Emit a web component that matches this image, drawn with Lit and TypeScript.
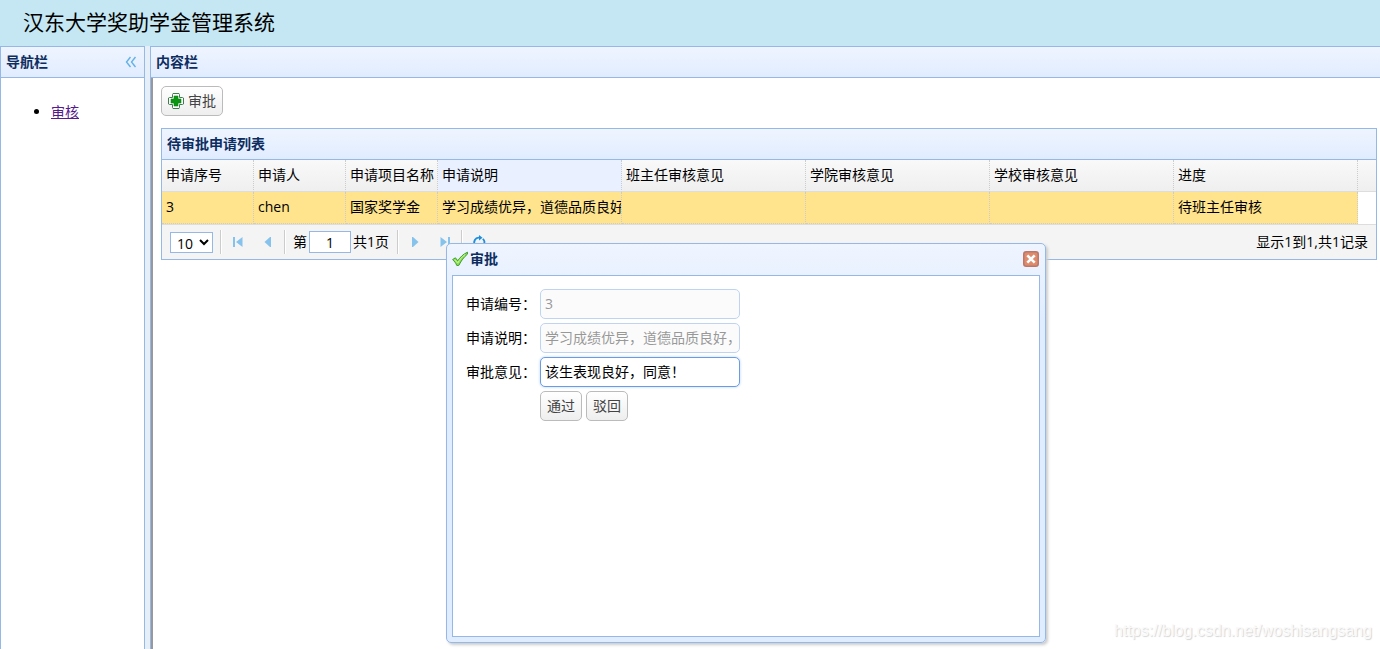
import { LitElement, html, css, svg } from "lit";
import { customElement, state } from "lit/decorators.js";

interface Column {
  field: string;
  title: string;
  span: number;
  hover?: boolean;
}

const COLUMNS: Column[] = [
  { field: "id", title: "申请序号", span: 1 },
  { field: "user", title: "申请人", span: 1 },
  { field: "project", title: "申请项目名称", span: 1 },
  { field: "note", title: "申请说明", span: 2, hover: true },
  { field: "teacher", title: "班主任审核意见", span: 2 },
  { field: "college", title: "学院审核意见", span: 2 },
  { field: "school", title: "学校审核意见", span: 2 },
  { field: "progress", title: "进度", span: 2 },
];

const ROWS: Record<string, string>[] = [
  {
    id: "3",
    user: "chen",
    project: "国家奖学金",
    note: "学习成绩优异，道德品质良好，",
    teacher: "",
    college: "",
    school: "",
    progress: "待班主任审核",
  },
];

const icon = (body: unknown) =>
  html`<svg class="icon" viewBox="0 0 16 16" width="16" height="16" aria-hidden="true">${body}</svg>`;

const addIcon = icon(svg`
  <path d="M5 .5h6l.5 1v3h3l1 .5v6l-1 .5h-3v3l-.5 1H5l-.5-1v-3h-3L.5 11V5l1-.5h3v-3z" fill="#fff" stroke="#3f7d4c"/>
  <path d="M6 3h4v3h3v4h-3v3H6v-3H3V6h3z" fill="#0c9512" stroke="#0a8a10" stroke-width=".6"/>`);

const okIcon = icon(svg`
  <path d="M.6 8.600 3.400 6.800l2.400 3C8 6.400 11 3.200 15.500 1.200L15.400 3.200C11.800 6.200 9.200 9.600 6.900 14.300L4.800 14.500C3.800 12 2.400 10.200.6 8.600z"
    fill="#8fe055" stroke="#3c9a2e" stroke-linejoin="round"/>
  <path d="M2.600 8.700 5.700 12C7.600 8.500 10.200 5.700 13 3.600" fill="none" stroke="#c8f59b"/>`);

const closeIcon = icon(svg`
  <rect x=".75" y=".75" width="14.500" height="14.500" rx="2.500" fill="#e08a6c" stroke="#b9786a" stroke-width="1.500"/>
  <path d="M4.300 4.300l7.400 7.400M11.700 4.300l-7.400 7.400" stroke="#fff" stroke-width="2.600"/>`);

const collapseIcon = icon(svg`
  <path d="M7.500 3 3.500 8l4 5M12.500 3l-4 5 4 5" fill="none" stroke="#64b1e6" stroke-width="1.400"/>`);

const firstIcon = icon(svg`<path d="M3 3h2v10H3zM12.500 3v10L6 8z" fill="#86c3ec"/>`);
const prevIcon = icon(svg`<path d="M11 3v10h-1L4.500 8 10 3z" fill="#86c3ec"/>`);
const nextIcon = icon(svg`<path d="M5 3v10h1l5.500-5L6 3z" fill="#86c3ec"/>`);
const lastIcon = icon(svg`<path d="M11 3h2v10h-2zM3.500 3v10L10 8z" fill="#86c3ec"/>`);
const reloadIcon = icon(svg`
  <path d="M4.300 11.200A4.600 4.600 0 0 1 8.500 3.700M11.800 4.800a4.600 4.600 0 0 1-4.200 7.900" fill="none" stroke="#1e8fdc" stroke-width="1.800"/>
  <path d="M8 1v5.500L11.500 3.700zM8 10v5.200L4.700 12.600z" fill="#1e8fdc"/>`);

@customElement("app-root")
export class AppRoot extends LitElement {
  @state() private opinion = "该生表现良好，同意！";

  static styles = css`
    :host {
      display: flex;
      flex-direction: column;
      position: relative;
      height: 100vh;
      overflow: hidden;
      background: #fff;
      color: #000;
      font: 14px/20px "Open Sans", "Noto Sans CJK SC", sans-serif;
    }
    * {
      box-sizing: border-box;
    }
    button,
    input,
    select {
      font: inherit;
    }
    .icon {
      display: block;
      flex: none;
    }
    .banner {
      flex: none;
      height: 46px;
      padding: 0 23px;
      background: #c4e7f3;
    }
    .banner h1 {
      margin: 0;
      font-size: 21px;
      line-height: 44px;
      font-weight: 400;
    }
    .layout {
      flex: 1;
      display: grid;
      grid-template-columns: 145px minmax(0, 1fr);
      gap: 5px;
      background: #e6eef8;
      min-height: 0;
    }
    .panel {
      display: flex;
      flex-direction: column;
      background: #fff;
      border: 1px solid #95b8e7;
      border-bottom: 0;
      min-height: 0;
    }
    .content {
      border-right: 0;
    }
    .bar {
      display: flex;
      align-items: center;
      justify-content: space-between;
      height: 31px;
      padding: 0 5px;
      border-bottom: 1px solid #95b8e7;
      background: linear-gradient(to bottom, #eff5ff, #e0ecff);
      color: #0e2d5f;
    }
    .bar h2,
    .window h2 {
      margin: 0;
      font: inherit;
      font-weight: 700;
    }
    .plain {
      display: flex;
      padding: 0;
      border: 0;
      background: none;
    }
    .menu {
      margin: 24px 0;
      padding-left: 50px;
    }
    .menu a {
      color: #551a8b;
    }
    .workspace {
      flex: 1;
      padding: 8px 3px 8px 8px;
      border-left: 2px solid #999;
    }
    .btn {
      display: inline-flex;
      align-items: center;
      gap: 4px;
      height: 30px;
      padding: 0 6px;
      border: 1px solid #bbb;
      border-radius: 5px;
      background: linear-gradient(to bottom, #fff, #eee);
      color: #444;
    }
    .grid {
      margin-top: 12px;
      border: 1px solid #95b8e7;
    }
    .view {
      border-bottom: 1px solid #ddd;
      background: linear-gradient(#f9f9f9, #efefef 31px, #ddd 31px, #ddd 32px, #fff 32px);
    }
    table {
      width: calc(100% - 18px);
      table-layout: fixed;
      border-collapse: separate;
      border-spacing: 0;
    }
    .narrow {
      width: 7.6923%;
    }
    .wide {
      width: 15.3846%;
    }
    th,
    td {
      height: 32px;
      padding: 0 0 2px 4px;
      border-right: 1px dotted #ccc;
      border-bottom: 1px dotted #ccc;
      text-align: left;
      font-weight: 400;
      white-space: nowrap;
      overflow: hidden;
    }
    th {
      border-bottom: 1px solid #ddd;
    }
    th.hover {
      background: #e9f0ff;
    }
    .selected td {
      background: #ffe48d;
    }
    .pager {
      display: flex;
      align-items: center;
      height: 34px;
      padding: 0 8px;
      background: #f4f4f4;
    }
    .pager select {
      width: 43px;
      height: 21px;
      margin-right: 6px;
      padding: 0 0 0 2px;
      border: 1px solid #95b8e7;
      background: #fff;
      color: #000;
      font-family: "Open Sans", sans-serif;
    }
    .pager input {
      width: 42px;
      height: 22px;
      margin: 0 2px;
      padding: 0;
      border: 1px solid #95b8e7;
      text-align: center;
    }
    .sep {
      width: 2px;
      height: 24px;
      margin: 0 1px;
      border-left: 1px solid #ccc;
      border-right: 1px solid #fff;
    }
    .nav {
      width: 30px;
      justify-content: center;
    }
    .page {
      display: flex;
      align-items: center;
      margin: 0 7px 0 6px;
    }
    .summary {
      margin-left: auto;
    }
    .window {
      position: absolute;
      left: 446px;
      top: 243px;
      width: 600px;
      height: 400px;
      display: flex;
      flex-direction: column;
      padding: 0 5px 5px;
      border: 1px solid #95b8e7;
      border-radius: 5px;
      background: linear-gradient(to bottom, #eff5ff, #e0ecff 20%);
      box-shadow: 2px 2px 3px #ccc;
    }
    .caption {
      display: flex;
      align-items: center;
      gap: 2px;
      height: 31px;
      padding: 0 1px 2px 0;
      color: #0e2d5f;
    }
    .caption .plain {
      margin-left: auto;
    }
    .form {
      flex: 1;
      display: grid;
      grid-template-columns: 70px 200px;
      grid-auto-rows: 30px;
      gap: 4px;
      align-items: center;
      padding: 13px;
      border: 1px solid #95b8e7;
      background: #fff;
    }
    .form input {
      height: 30px;
      min-width: 0;
      padding: 0 4px 2px;
      border: 1px solid #95b8e7;
      border-radius: 5px;
      outline: none;
      background: #fff;
      color: #000;
    }
    .form input:disabled {
      opacity: 0.6;
      background: #fafafa;
      color: #545454;
    }
    .form .active {
      border-color: #6b9cde;
      box-shadow: 0 0 3px #b7d2ff;
    }
    .actions {
      grid-column: 2;
      display: flex;
      gap: 4px;
    }
    .watermark {
      position: absolute;
      right: 8px;
      bottom: 8px;
      color: #fafafa;
      text-shadow: 1px 1px 1px #d4d4d4;
      font: 16px/20px "Liberation Sans", sans-serif;
    }
  `;

  render() {
    return html`
      <header class="banner"><h1>汉东大学奖助学金管理系统</h1></header>
      <div class="layout">
        <nav class="panel">
          <div class="bar">
            <h2>导航栏</h2>
            <button class="plain" aria-label="collapse">${collapseIcon}</button>
          </div>
          <ul class="menu">
            <li><a href="#">审核</a></li>
          </ul>
        </nav>
        <main class="panel content">
          <div class="bar"><h2>内容栏</h2></div>
          <div class="workspace">
            <button class="btn">${addIcon}审批</button>
            <section class="grid">
              <div class="bar"><h2>待审批申请列表</h2></div>
              ${this.renderTable()} ${this.renderPager()}
            </section>
          </div>
        </main>
      </div>
      ${this.renderWindow()}
      <div class="watermark">https://blog.csdn.net/woshisangsang</div>
    `;
  }

  private renderTable() {
    return html`<div class="view">
      <table>
        <colgroup>
          ${COLUMNS.map((c) => html`<col class=${c.span === 1 ? "narrow" : "wide"} />`)}
        </colgroup>
        <thead>
          <tr>
            ${COLUMNS.map((c) => html`<th scope="col" class=${c.hover ? "hover" : ""}>${c.title}</th>`)}
          </tr>
        </thead>
        <tbody>
          ${ROWS.map(
            (row) => html`<tr class="selected">
              ${COLUMNS.map((c) => html`<td>${row[c.field]}</td>`)}
            </tr>`
          )}
        </tbody>
      </table>
    </div>`;
  }

  private renderPager() {
    return html`<div class="pager">
      <select aria-label="page size">
        <option>10</option>
        <option>20</option>
        <option>50</option>
      </select>
      <span class="sep"></span>
      <button class="plain nav" aria-label="first">${firstIcon}</button>
      <button class="plain nav" aria-label="previous">${prevIcon}</button>
      <span class="sep"></span>
      <div class="page">
        <label for="page">第</label>
        <input id="page" type="text" value="1" />
        <span>共1页</span>
      </div>
      <span class="sep"></span>
      <button class="plain nav" aria-label="next">${nextIcon}</button>
      <button class="plain nav" aria-label="last">${lastIcon}</button>
      <span class="sep"></span>
      <button class="plain nav" aria-label="reload">${reloadIcon}</button>
      <span class="summary">显示1到1,共1记录</span>
    </div>`;
  }

  private renderWindow() {
    return html`<section class="window" role="dialog" aria-labelledby="window-title">
      <div class="caption">
        ${okIcon}
        <h2 id="window-title">审批</h2>
        <button class="plain" aria-label="close">${closeIcon}</button>
      </div>
      <form class="form" @submit=${(e: Event) => e.preventDefault()}>
        <label for="apply-id">申请编号：</label>
        <input id="apply-id" type="text" value="3" disabled />
        <label for="apply-note">申请说明：</label>
        <input id="apply-note" type="text" value=${ROWS[0].note} disabled />
        <label for="opinion">审批意见：</label>
        <input
          id="opinion"
          class="active"
          type="text"
          .value=${this.opinion}
          @input=${(e: Event) => (this.opinion = (e.target as HTMLInputElement).value)}
        />
        <div class="actions">
          <button class="btn" type="submit">通过</button>
          <button class="btn" type="button">驳回</button>
        </div>
      </form>
    </section>`;
  }
}
